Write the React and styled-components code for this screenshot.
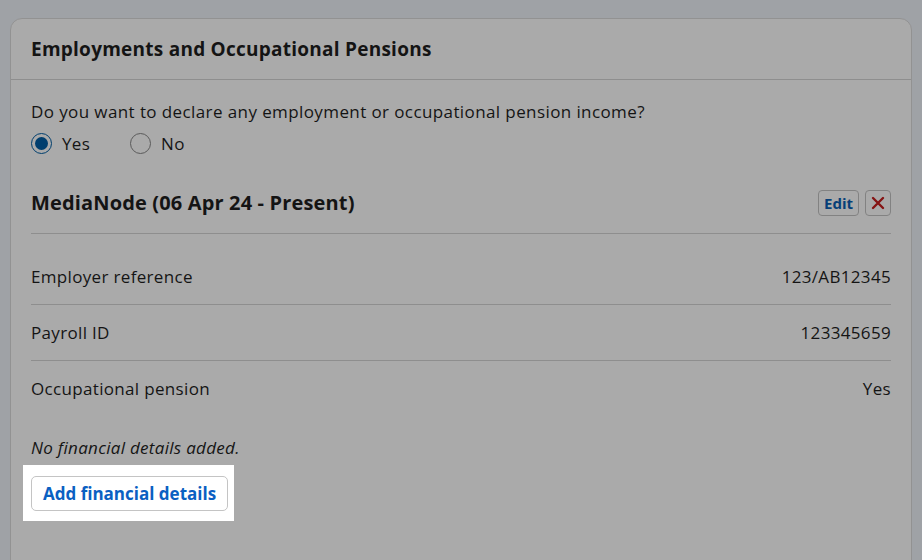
import React, { useState } from "react";
import styled, { createGlobalStyle } from "styled-components";

const GlobalStyle = createGlobalStyle`
    body {
        margin: 0;
        background: #eff3fa;
        font-family: "Open Sans", "Liberation Sans", sans-serif;
        color: #1f1f1f;
    }
`;

const Page = styled.div`
    padding: 18px 10px 0;
    height: 560px;
    box-sizing: border-box;
    overflow: hidden;
`;

const Card = styled.section`
    background: #ffffff;
    border: 1px solid #dcdcdc;
    border-radius: 12px;
    min-height: 600px;
`;

const CardHeader = styled.header`
    height: 60px;
    display: flex;
    align-items: center;
    padding: 0 20px;
    border-bottom: 1px solid #d6d6d6;

    h2 {
        margin: 0;
        font-size: 19px;
        font-weight: 700;
        letter-spacing: 0.25px;
    }
`;

const CardBody = styled.div`
    padding: 20px 20px;
`;

const Question = styled.p`
    margin: 0;
    font-size: 17px;
    line-height: 24px;
    letter-spacing: 0.4px;
`;

const RadioRow = styled.div`
    display: flex;
    gap: 40px;
    margin-top: 8px;
`;

const RadioLabel = styled.label`
    display: flex;
    align-items: center;
    gap: 10px;
    font-size: 17px;
    letter-spacing: 0.3px;
    cursor: pointer;
`;

const RadioDot = styled.span`
    width: 21px;
    height: 21px;
    box-sizing: border-box;
    border-radius: 50%;
    border: 1px solid ${(p) => (p.checked ? "#005ea5" : "#888")};
    display: flex;
    align-items: center;
    justify-content: center;
    background: #fff;

    &::after {
        content: "";
        width: 13px;
        height: 13px;
        border-radius: 50%;
        background: ${(p) => (p.checked ? "#005ea5" : "transparent")};
    }
`;

const EmploymentHead = styled.div`
    display: flex;
    align-items: center;
    justify-content: space-between;
    margin-top: 34px;
    padding-bottom: 17px;
    border-bottom: 1px solid #d6d6d6;

    h3 {
        margin: 0;
        font-size: 20px;
        font-weight: 700;
        letter-spacing: 0.15px;
    }
`;

const Actions = styled.div`
    display: flex;
    gap: 6px;
`;

const SmallButton = styled.button`
    height: 26px;
    min-width: 26px;
    padding: 0 5px;
    border: 1px solid #c4c4c4;
    border-radius: 4px;
    background: #fff;
    color: #0a5fb4;
    font-family: inherit;
    font-size: 15px;
    font-weight: 700;
    display: flex;
    align-items: center;
    justify-content: center;
    cursor: pointer;
`;

const DetailList = styled.dl`
    margin: 15px 0 0;
`;

const DetailRow = styled.div`
    height: 56px;
    box-sizing: border-box;
    display: flex;
    align-items: center;
    justify-content: space-between;
    font-size: 17px;
    letter-spacing: 0.33px;
    border-bottom: 1px solid ${(p) => (p.last ? "transparent" : "#d6d6d6")};

    dt,
    dd {
        margin: 0;
    }
`;

const Empty = styled.p`
    margin: 19px 0 0;
    font-size: 17px;
    font-style: italic;
    letter-spacing: 0.3px;
`;

const Spotlight = styled.div`
    display: flex;
    width: fit-content;
    position: relative;
    z-index: 10;
    margin: 6px 0 0 -8px;
    padding: 11px 6px 10px 8px;
    background: #fff;
    box-shadow: 0 0 0 3000px rgba(0, 0, 0, 0.335);
`;

const OutlineButton = styled.button`
    height: 35px;
    padding: 0 11px;
    border: 1px solid #c4c4c4;
    border-radius: 5px;
    background: #fff;
    color: #0a60c2;
    font-family: inherit;
    font-size: 17px;
    font-weight: 700;
    cursor: pointer;
`;

const details = [
    { label: "Employer reference", value: "123/AB12345" },
    { label: "Payroll ID", value: "123345659" },
    { label: "Occupational pension", value: "Yes" },
];

export default function App() {
    const [declare, setDeclare] = useState(true);

    return (
        <>
            <GlobalStyle />
            <Page>
                <Card>
                    <CardHeader>
                        <h2>Employments and Occupational Pensions</h2>
                    </CardHeader>
                    <CardBody>
                        <Question>
                            Do you want to declare any employment or occupational
                            pension income?
                        </Question>
                        <RadioRow>
                            <RadioLabel onClick={() => setDeclare(true)}>
                                <RadioDot checked={declare} />
                                Yes
                            </RadioLabel>
                            <RadioLabel onClick={() => setDeclare(false)}>
                                <RadioDot checked={!declare} />
                                No
                            </RadioLabel>
                        </RadioRow>

                        <EmploymentHead>
                            <h3>MediaNode (06 Apr 24 - Present)</h3>
                            <Actions>
                                <SmallButton>Edit</SmallButton>
                                <SmallButton aria-label="Remove">
                                    <svg width="14" height="14" viewBox="0 0 14 14">
                                        <path
                                            d="M2 2 L12 12 M12 2 L2 12"
                                            stroke="#c81e1e"
                                            strokeWidth="2.4"
                                            strokeLinecap="round"
                                        />
                                    </svg>
                                </SmallButton>
                            </Actions>
                        </EmploymentHead>

                        <DetailList>
                            {details.map((d, i) => (
                                <DetailRow key={d.label} last={i === details.length - 1}>
                                    <dt>{d.label}</dt>
                                    <dd>{d.value}</dd>
                                </DetailRow>
                            ))}
                        </DetailList>

                        <Empty>No financial details added.</Empty>
                        <Spotlight>
                            <OutlineButton>Add financial details</OutlineButton>
                        </Spotlight>
                    </CardBody>
                </Card>
            </Page>
        </>
    );
}
